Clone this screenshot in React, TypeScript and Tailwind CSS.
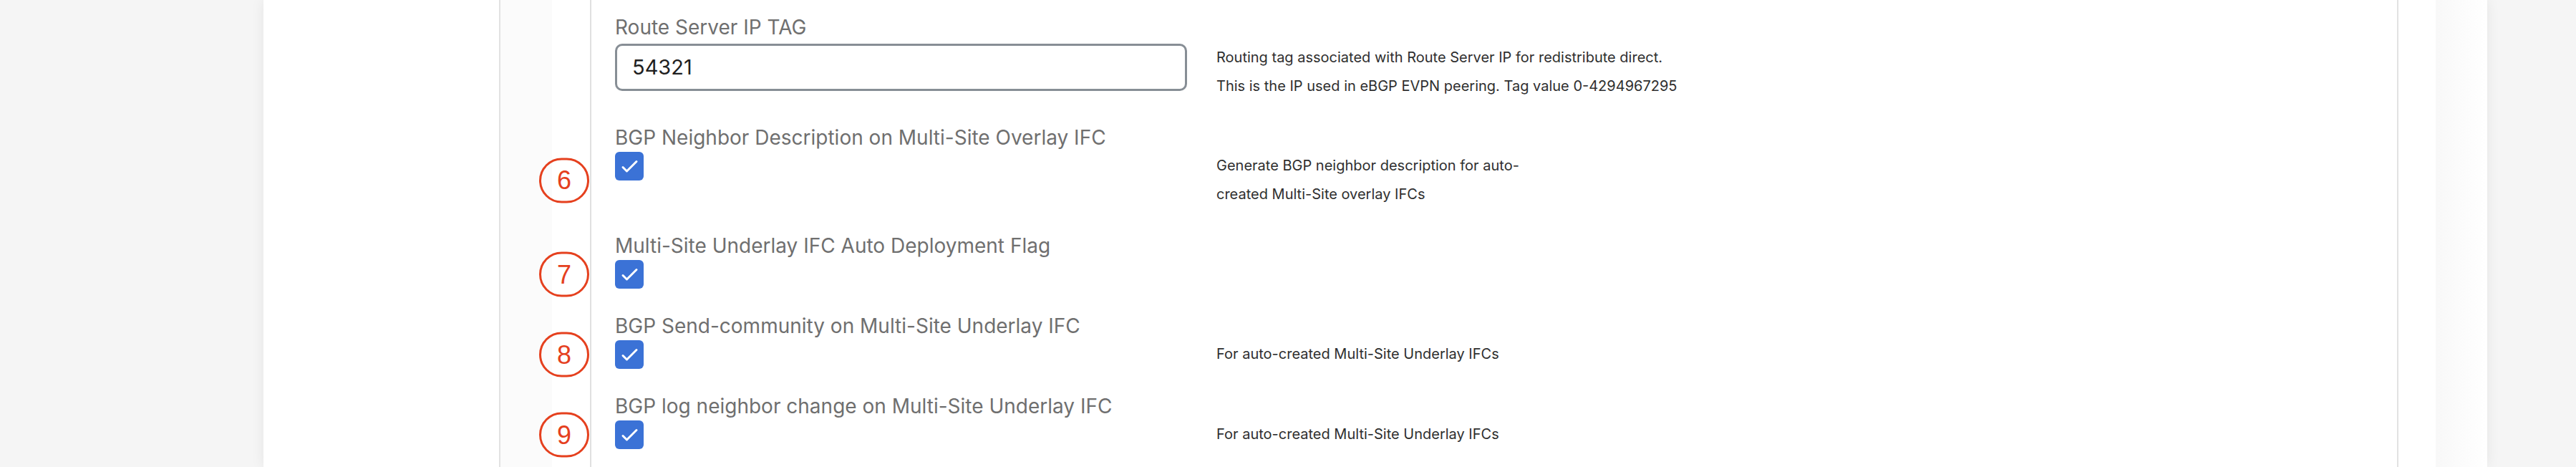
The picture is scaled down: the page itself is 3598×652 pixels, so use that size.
import React from 'react';

type Row = {
  label: string;
  kind: 'input' | 'check';
  value?: string;
  marker?: number;
  desc?: string[];
};

const rows: Row[] = [
  {
    label: 'Route Server IP TAG',
    kind: 'input',
    value: '54321',
    desc: [
      'Routing tag associated with Route Server IP for redistribute direct.',
      'This is the IP used in eBGP EVPN peering. Tag value 0-4294967295',
    ],
  },
  {
    label: 'BGP Neighbor Description on Multi-Site Overlay IFC',
    kind: 'check',
    marker: 6,
    desc: ['Generate BGP neighbor description for auto-', 'created Multi-Site overlay IFCs'],
  },
  {
    label: 'Multi-Site Underlay IFC Auto Deployment Flag',
    kind: 'check',
    marker: 7,
  },
  {
    label: 'BGP Send-community on Multi-Site Underlay IFC',
    kind: 'check',
    marker: 8,
    desc: ['For auto-created Multi-Site Underlay IFCs'],
  },
  {
    label: 'BGP log neighbor change on Multi-Site Underlay IFC',
    kind: 'check',
    marker: 9,
    desc: ['For auto-created Multi-Site Underlay IFCs'],
  },
];

/**
 * Blue checked box
 */
const CheckBox: React.FC = () => (
  <div className="w-[40px] h-[40px] rounded-[6px] bg-[#3b72d6] flex items-center justify-center">
    <svg width="40" height="40" viewBox="0 0 40 40" fill="none">
      <polyline
        points="11,21.5 16.5,27 30,13.5"
        stroke="white"
        strokeWidth="3"
        strokeLinecap="round"
        strokeLinejoin="round"
      />
    </svg>
  </div>
);

/**
 * Red annotation ring with a number
 */
const Marker: React.FC<{ n: number }> = ({ n }) => (
  <div className="absolute left-[-106px] top-1/2 -translate-y-1/2 w-[70px] h-[63px] rounded-full border-[3px] border-[#e5401e] flex items-center justify-center text-[#e5401e] text-[36px] leading-none font-['Liberation_Sans',sans-serif]">
    {n}
  </div>
);

const FieldRow: React.FC<{ row: Row }> = ({ row }) => (
  <div>
    <div className="text-[28px] leading-[36px] text-[#6f6f6f]">{row.label}</div>
    <div className={`flex ${row.kind === 'input' ? 'mt-[5px]' : 'mt-[2px]'}`}>
      <div className="relative w-[840px] shrink-0">
        {row.kind === 'input' ? (
          <div className="w-[799px] h-[66px] border-[3px] border-[#878e95] rounded-[10px] flex items-center pl-[21px] text-[29px] text-[#1f1f1f]">
            {row.value}
          </div>
        ) : (
          <CheckBox />
        )}
        {row.marker && <Marker n={row.marker} />}
      </div>
      {row.desc && (
        <div className="text-[20px] leading-[40px] text-[#2f2f2f] -mt-[1px]">
          {row.desc.map((line) => (
            <div key={line}>{line}</div>
          ))}
        </div>
      )}
    </div>
  </div>
);

const App: React.FC = () => {
  return (
    <div className="w-full h-[652px] overflow-hidden bg-[#f5f5f5] flex font-['Inter','Noto_Sans',sans-serif]">
      <div className="w-[368px] shrink-0" />
      <div className="w-[3106px] shrink-0 bg-white shadow-[0_0_18px_rgba(0,0,0,0.07)] flex">
        <div className="w-[329px] shrink-0" />
        <div className="w-[2653px] shrink-0 border-l-2 border-r-2 border-[#e2e2e2] flex">
          <div className="w-[72px] shrink-0 bg-[#fbfbfb]" />
          <div className="w-[53px] shrink-0" />
          <div className="flex-1 border-l-2 border-[#e0e0e0] pl-[33px] pt-[20px] flex flex-col gap-[34px]">
            {rows.map((row) => (
              <FieldRow key={row.label} row={row} />
            ))}
          </div>
        </div>
        <div className="w-[52px] shrink-0" />
        <div className="w-[72px] shrink-0 bg-gradient-to-r from-[#f8f8f8] to-white" />
      </div>
    </div>
  );
};

export default App;
